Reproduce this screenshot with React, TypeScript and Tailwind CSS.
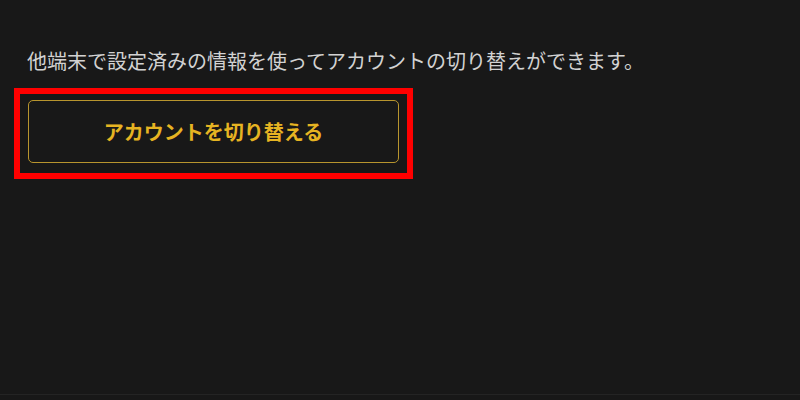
export default function App() {
  return (
    <div
      className="flex h-[400px] w-[800px] flex-col bg-[#181818] pt-[46px]"
      style={{ fontFamily: '"Noto Sans CJK JP", "Noto Sans", sans-serif' }}
    >
      <p className="pl-[27px] text-[20px] leading-[30px] text-[#d2d2d2]">
        他端末で設定済みの情報を使ってアカウントの切り替えができます。
      </p>

      <div className="ml-[14px] mt-[12px] w-[399px] border-[6px] border-[#ff0000] pb-[10px] pl-[8px] pr-[8px] pt-[6px]">
        <button className="flex h-[63px] w-[371px] items-center justify-center rounded-[5px] border-[1.5px] border-[#b8952e] bg-transparent text-[20px] font-bold text-[#e6b422]">
          アカウントを切り替える
        </button>
      </div>

      <div className="mt-auto mb-[5px] h-px w-full bg-[#242424]" />
    </div>
  );
}
